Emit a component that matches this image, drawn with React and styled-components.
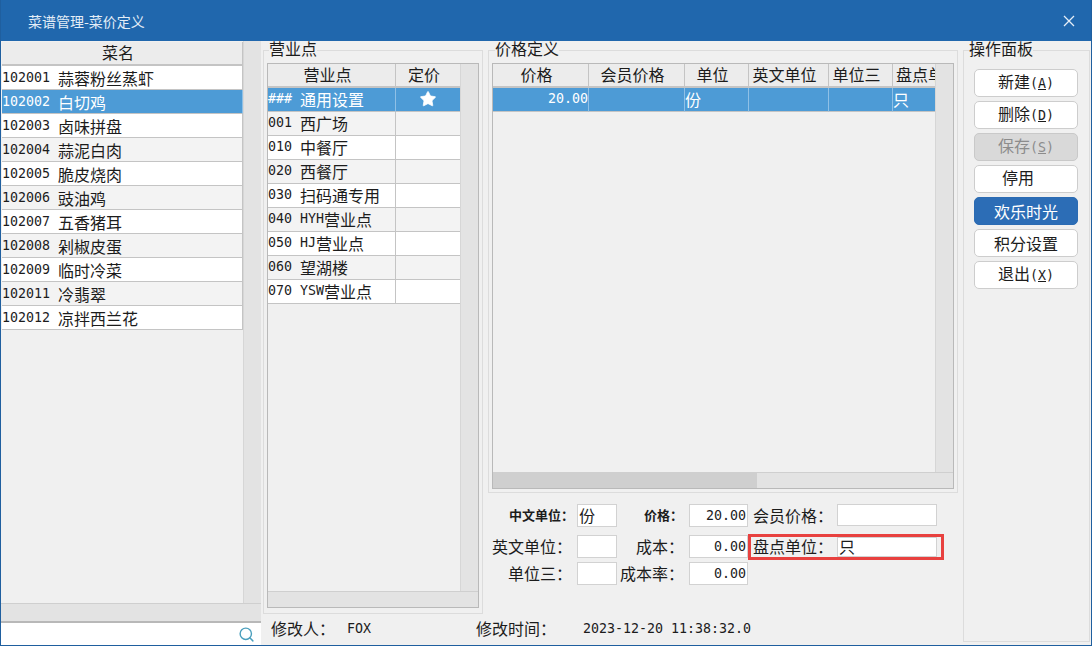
import React from 'react';
import styled, { createGlobalStyle } from 'styled-components';
import { Search, Star } from 'lucide-react';

const GlobalStyle = createGlobalStyle`
    html, body {
        margin: 0;
        padding: 0;
        background: #f0f0f0;
    }
    body {
        font-family: "Noto Sans CJK SC", "Liberation Sans", sans-serif;
        font-size: 16px;
        color: #1c1c1c;
    }
`;

const Latin = styled.span`
    font-family: "DejaVu Sans Mono", "Liberation Mono", monospace;
    font-size: 13.3px;
    white-space: pre;
`;

// the original draws latin text in half-width cells, so split the runs apart
const T = ({ children }) => {
    const parts = String(children).split(/([\x20-\x7e]+)/).filter(Boolean);
    return parts.map((part, i) => (
        /[\x20-\x7e]/.test(part) ? <Latin key={i}>{part}</Latin> : <span key={i}>{part}</span>
    ));
};

const Window = styled.div`
    width: 1092px;
    height: 646px;
    box-sizing: border-box;
    display: flex;
    flex-direction: column;
    background: #f0f0f0;
    border: 1px solid #1f5f9f;
    border-top: 0;
    overflow: hidden;
`;

const TitleBar = styled.div`
    height: 41px;
    flex: none;
    margin: 0 -1px;
    padding: 0 17px 0 28px;
    display: flex;
    align-items: center;
    justify-content: space-between;
    background: #2067ad;
    color: #e3edf7;
    font-size: 14px;
`;

const CloseIcon = styled.svg`
    width: 12px;
    height: 12px;
    stroke: #e6eef7;
    stroke-width: 1.3;
`;

const Body = styled.div`
    flex: 1;
    min-height: 0;
    display: flex;
`;

const LeftPane = styled.div`
    width: 260px;
    flex: none;
    display: flex;
    flex-direction: column;
`;

const ListArea = styled.div`
    flex: 1;
    min-height: 0;
    display: flex;
    padding-left: 1px;
`;

const Table = styled.div`
    flex: 1;
    min-width: 0;
    display: grid;
    grid-template-columns: ${(p) => p.$cols};
    grid-auto-rows: 24px;
    align-content: start;
    margin-top: ${(p) => p.$top || 0}px;
`;

const HeadCell = styled.div`
    height: 24px;
    box-sizing: border-box;
    display: flex;
    align-items: center;
    justify-content: ${(p) => (p.$clip ? 'flex-start' : 'center')};
    padding: ${(p) => (p.$clip ? '0 0 2px 3px' : '0 8px 2px 0')};
    overflow: ${(p) => (p.$clip ? 'clip visible' : 'visible')};
    white-space: nowrap;
    line-height: 18px;
    background: #ececec;
    border-right: 1px solid #c4c4c4;
    border-bottom: 2px solid #c4c4c4;
`;

const rowBackground = (p) => {
    if (p.$selected) return '#4d9bd6';
    return p.$odd ? '#f3f3f3' : '#ffffff';
};

const Cell = styled.div`
    height: 24px;
    box-sizing: border-box;
    display: flex;
    align-items: center;
    justify-content: ${(p) => p.$align || 'flex-start'};
    white-space: nowrap;
    line-height: 18px;
    background: ${rowBackground};
    color: ${(p) => (p.$selected ? '#ffffff' : '#1c1c1c')};
    border-right: 1px solid ${(p) => (p.$selected ? '#8fc0e6' : '#c4c4c4')};
    border-bottom: 1px solid #c4c4c4;
    padding-bottom: ${(p) => p.$lift ?? 2}px;
`;

const VBar = styled.div`
    width: ${(p) => p.$w || 18}px;
    flex: none;
    background: #e3e3e3;
    border-left: 1px solid #d6d6d6;
    box-sizing: border-box;
`;

const HBar = styled.div`
    height: ${(p) => p.$h || 18}px;
    flex: none;
    background: #e3e3e3;
    border-top: 1px solid #cfcfcf;
    box-sizing: border-box;
`;

const HThumb = styled.div`
    width: ${(p) => p.$w}px;
    height: 100%;
    background: #cfcfcf;
`;

const SearchBox = styled.div`
    height: 24px;
    flex: none;
    box-sizing: border-box;
    display: flex;
    align-items: center;
    justify-content: flex-end;
    padding-right: 6px;
    background: #ffffff;
    border-top: 2px solid #b8b8b8;
    color: #4b9fbd;
`;

const MiddlePane = styled.div`
    flex: 1;
    min-width: 0;
    display: flex;
    flex-direction: column;
    padding-left: 2px;
`;

const Groups = styled.div`
    flex: 1;
    min-height: 0;
    display: flex;
    gap: 5px;
`;

const Group = styled.fieldset`
    width: ${(p) => p.$w}px;
    height: ${(p) => p.$h}px;
    box-sizing: border-box;
    flex: none;
    margin: 1px 0 0;
    padding: 5px 3px 3px;
    border: 1px solid #dcdcdc;
    min-width: 0;
`;

const Legend = styled.legend`
    padding: 0 0 4px;
    margin-left: ${(p) => p.$x}px;
    font-size: 16px;
    line-height: 12px;
`;

const Frame = styled.div`
    height: ${(p) => p.$h}px;
    box-sizing: border-box;
    display: flex;
    flex-direction: column;
    border: 1px solid #b9b9b9;
`;

const FrameRow = styled.div`
    flex: 1;
    min-height: 0;
    display: flex;
`;

const RightStack = styled.div`
    display: flex;
    flex-direction: column;
`;

const PriceForm = styled.div`
    display: grid;
    grid-template-columns: 89px 40px 72px 59px 89px 100px;
    grid-template-rows: 31px 27px 23px;
    align-items: start;
    margin-top: 11px;
`;

const FieldLabel = styled.div`
    height: 23px;
    box-sizing: border-box;
    display: flex;
    align-items: center;
    justify-content: ${(p) => (p.$left ? 'flex-start' : 'flex-end')};
    padding: 0 ${(p) => (p.$left ? 0 : p.$pr ?? 5)}px 2px ${(p) => (p.$left ? 5 : 0)}px;
    white-space: nowrap;
    line-height: 18px;
    font-size: ${(p) => (p.$bold ? 13 : 16)}px;
    font-weight: ${(p) => (p.$bold ? 700 : 400)};
`;

const FieldInput = styled.div`
    width: ${(p) => (p.$w ? `${p.$w}px` : 'auto')};
    height: ${(p) => p.$h || 23}px;
    box-sizing: border-box;
    display: flex;
    align-items: center;
    justify-content: ${(p) => (p.$right ? 'flex-end' : 'flex-start')};
    background: #ffffff;
    border: 1px solid #d2d2d2;
    padding: 0 1px 1px;
    white-space: nowrap;
    line-height: 17px;
`;

const Highlight = styled.div`
    grid-column: 5 / 7;
    height: 26px;
    box-sizing: border-box;
    margin: -1px -7px 0 0;
    padding-right: 4px;
    display: flex;
    border: 3px solid #e8413f;
    align-items: center;
`;

const HighlightLabel = styled.div`
    width: 86px;
    flex: none;
    padding: 0 0 2px 2px;
    box-sizing: border-box;
    white-space: nowrap;
    line-height: 18px;
`;

const StatusBar = styled.div`
    height: 30px;
    flex: none;
    box-sizing: border-box;
    display: grid;
    grid-template-columns: 76px 129px 107px 1fr;
    align-items: center;
    padding: 0 0 4px 8px;
    white-space: nowrap;
`;

const ActionPanel = styled.fieldset`
    width: 127px;
    height: 600px;
    box-sizing: border-box;
    flex: none;
    margin: 1px 1px 0 0;
    padding: 11px 11px 0 10px;
    border: 1px solid #dcdcdc;
    min-width: 0;
    display: flex;
    flex-direction: column;
    gap: 4px;
`;

const ActionButton = styled.button`
    width: 104px;
    height: 28px;
    flex: none;
    padding: 0 0 1px;
    box-sizing: border-box;
    border-radius: 5px;
    border: 1px solid ${(p) => (p.$primary ? '#2b6bb3' : p.disabled ? '#c9c9c9' : '#cdcdcd')};
    background: ${(p) => (p.$primary ? '#2c6db6' : p.disabled ? '#d9d9d9' : '#ffffff')};
    color: ${(p) => (p.$primary ? '#ffffff' : p.disabled ? '#8c8c8c' : '#1c1c1c')};
    font-family: inherit;
    font-size: 16px;
    line-height: 22px;
`;

const dishes = [
    '102001 蒜蓉粉丝蒸虾', '102002 白切鸡', '102003 卤味拼盘', '102004 蒜泥白肉',
    '102005 脆皮烧肉', '102006 豉油鸡', '102007 五香猪耳', '102008 剁椒皮蛋',
    '102009 临时冷菜', '102011 冷翡翠', '102012 凉拌西兰花',
];

const outlets = [
    '### 通用设置', '001 西广场', '010 中餐厅', '020 西餐厅', '030 扫码通专用',
    '040 HYH营业点', '050 HJ营业点', '060 望湖楼', '070 YSW营业点',
];

const priceHeads = ['价格', '会员价格', '单位', '英文单位', '单位三'];

const actions = [
    { label: '新建', key: 'A' },
    { label: '删除', key: 'D' },
    { label: '保存', key: 'S', disabled: true },
    { label: '停用  ' },
    { label: '欢乐时光', primary: true },
    { label: '积分设置' },
    { label: '退出', key: 'X' },
];

const App = () => (
    <Window>
        <GlobalStyle />
        <TitleBar>
            <span>菜谱管理-菜价定义</span>
            <CloseIcon viewBox="0 0 12 12">
                <path d="M1 1 L11 11 M11 1 L1 11" />
            </CloseIcon>
        </TitleBar>
        <Body>
            <LeftPane>
                <ListArea>
                    <Table $cols="1fr" $top={1}>
                        <HeadCell>菜名</HeadCell>
                        {dishes.map((dish, i) => (
                            <Cell key={dish} $lift={0} $selected={i === 1} $odd={i > 2 && i % 2 === 1}>
                                <T>{dish}</T>
                            </Cell>
                        ))}
                    </Table>
                    <VBar />
                </ListArea>
                <HBar />
                <SearchBox>
                    <Search size={17} strokeWidth={2} />
                </SearchBox>
            </LeftPane>
            <MiddlePane>
                <Groups>
                    <Group $w={220} $h={572}>
                        <Legend $x={2}>营业点</Legend>
                        <Frame $h={545}>
                            <FrameRow>
                                <Table $cols="128px 65px">
                                    <HeadCell>营业点</HeadCell>
                                    <HeadCell>定价</HeadCell>
                                    {outlets.map((outlet, i) => (
                                        <React.Fragment key={outlet}>
                                            <Cell $selected={i === 0} $odd={i % 2 === 1}><T>{outlet}</T></Cell>
                                            <Cell $selected={i === 0} $odd={i % 2 === 1} $align="center">
                                                {i === 0 && <Star size={18} fill="#ffffff" strokeWidth={1} />}
                                            </Cell>
                                        </React.Fragment>
                                    ))}
                                </Table>
                                <VBar />
                            </FrameRow>
                            <HBar $h={16} />
                        </Frame>
                    </Group>
                    <RightStack>
                        <Group $w={470} $h={451}>
                            <Legend $x={3}>价格定义</Legend>
                            <Frame $h={426}>
                                <FrameRow>
                                    <Table $cols="96px 96px 64px 80px 64px 45px">
                                        {priceHeads.map((head) => (
                                            <HeadCell key={head}>{head}</HeadCell>
                                        ))}
                                        <HeadCell $clip>盘点单</HeadCell>
                                        <Cell $selected $align="flex-end"><T>20.00</T></Cell>
                                        <Cell $selected />
                                        <Cell $selected>份</Cell>
                                        <Cell $selected />
                                        <Cell $selected />
                                        <Cell $selected>只</Cell>
                                    </Table>
                                    <VBar />
                                </FrameRow>
                                <HBar $h={16}>
                                    <HThumb $w={264} />
                                </HBar>
                            </Frame>
                        </Group>
                        <PriceForm>
                            <FieldLabel $bold $pr={3}>中文单位：</FieldLabel>
                            <FieldInput>份</FieldInput>
                            <FieldLabel $bold $pr={6}>价格：</FieldLabel>
                            <FieldInput $right><T>20.00</T></FieldInput>
                            <FieldLabel $left>会员价格：</FieldLabel>
                            <FieldInput $h={22} />
                            <FieldLabel>英文单位：</FieldLabel>
                            <FieldInput />
                            <FieldLabel>成本：</FieldLabel>
                            <FieldInput $right><T>0.00</T></FieldInput>
                            <Highlight>
                                <HighlightLabel>盘点单位：</HighlightLabel>
                                <FieldInput $h={20} $w={100}>只</FieldInput>
                            </Highlight>
                            <FieldLabel>单位三：</FieldLabel>
                            <FieldInput />
                            <FieldLabel>成本率：</FieldLabel>
                            <FieldInput $right><T>0.00</T></FieldInput>
                        </PriceForm>
                    </RightStack>
                </Groups>
                <StatusBar>
                    <span>修改人：</span>
                    <Latin>FOX</Latin>
                    <span>修改时间：</span>
                    <Latin>2023-12-20 11:38:32.0</Latin>
                </StatusBar>
            </MiddlePane>
            <ActionPanel>
                <Legend $x={-5}>操作面板</Legend>
                {actions.map((action) => (
                    <ActionButton key={action.label} disabled={action.disabled} $primary={action.primary}>
                        <T>{action.label}</T>
                        {action.key && <Latin>(<u>{action.key}</u>)</Latin>}
                    </ActionButton>
                ))}
            </ActionPanel>
        </Body>
    </Window>
);

export default App;
